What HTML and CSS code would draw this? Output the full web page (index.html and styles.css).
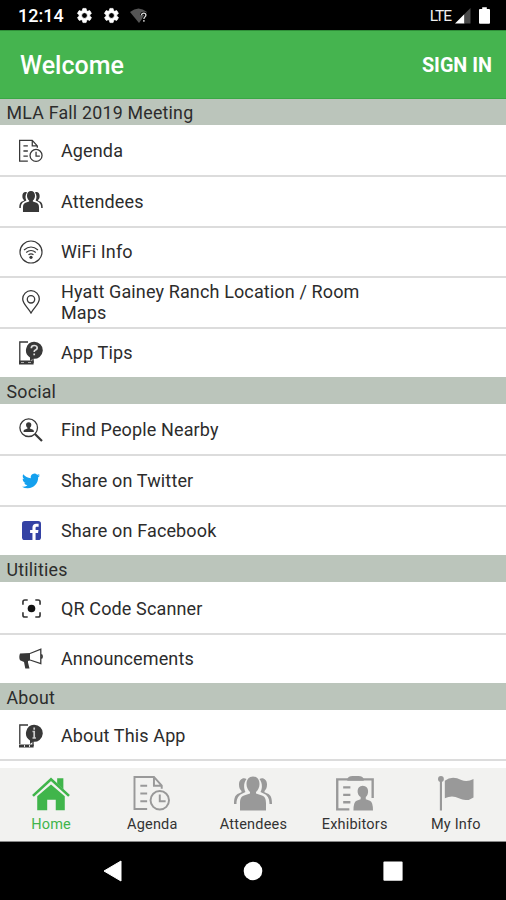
FILE: index.html
```html
<!DOCTYPE html>
<html lang="en">
<head>
<meta charset="utf-8">
<title>Welcome</title>
<link rel="stylesheet" href="styles.css">
</head>
<body>
<svg class="defs" aria-hidden="true">
  <symbol id="gear" viewBox="0 0 24 24"><path d="M19.4 13c0-.3.1-.6.1-1s0-.7-.1-1l2.1-1.600c.2-.2.300-.4.100-.6l-2-3.500c-.1-.2-.4-.3-.6-.2l-2.500 1c-.5-.4-1.100-.7-1.700-1l-.4-2.600c0-.3-.2-.5-.5-.5h-4c-.2 0-.4.200-.5.500l-.4 2.600c-.6.200-1.200.6-1.700 1l-2.500-1c-.2-.1-.5 0-.6.200l-2 3.500c-.1.200-.1.500.1.600L4.500 11c0 .3-.1.700-.1 1s0 .7.100 1l-2.100 1.600c-.2.200-.3.400-.1.600l2 3.500c.1.200.4.300.6.200l2.500-1c.5.400 1.100.7 1.700 1l.4 2.600c0 .3.200.5.500.5h4c.3 0 .5-.2.500-.5l.4-2.600c.6-.2 1.200-.6 1.700-1l2.500 1c.2.100.5 0 .6-.2l2-3.500c.1-.2.100-.5-.1-.6zM12 16a4 4 0 1 1 0-8 4 4 0 0 1 0 8z" fill="currentColor" fill-rule="evenodd" stroke="currentColor" stroke-width="1"/></symbol>
  <symbol id="agenda" viewBox="0 0 38 36"><g fill="none" stroke="currentColor" stroke-width="2"><path d="M14 34H1V1h20l8 9v3M21 1v9h8M7 10h7M7 18h7M7 26h7"/><circle cx="27" cy="25" r="9.500"/><path d="M27 19v7h6"/></g></symbol>
  <symbol id="people" viewBox="0 0 38 34"><g fill="currentColor"><path d="M19 0c4 0 6.500 3 6.500 7.500 0 3.500-1.500 6-3.500 8v1.500l6 2c3 1 4 3.500 4 8V34H6v-7c0-4.500 1-7 4-8l6-2v-1.500c-2-2-3.500-4.500-3.500-8C12.500 3 15 0 19 0z"/><path d="M12.500 2.500C9 .5 5 3 5 8c0 3.500 1 5 2.500 6.500v1.200L3.500 17.500C1 19 0 22 0 27.500h2.500C2.500 22.500 4 20 6.500 18l5-2.500c-2-4-2-9 1-13zM25.500 2.500C29 .5 33 3 33 8c0 3.500-1 5-2.500 6.500v1.200l4 1.800C37 19 38 22 38 27.500h-2.500c0-5-1.500-7.500-4-9.500l-5-2.500c2-4 2-9-1-13z"/></g></symbol>
</svg>
<div class="screen">
  <header class="status">
    <span class="time">12:14</span>
    <svg class="gear"><use href="#gear"/></svg>
    <svg class="gear"><use href="#gear"/></svg>
    <svg class="wifi" viewBox="0 0 18 16"><path d="M0 4Q8.500-3 17 4L9 15z" fill="#555"/><path d="M11.500 7.200q.2-2 2.200-2 2.200 0 2.200 2c0 1.600-2 1.800-2 3.800M13.900 12v1.800" fill="none" stroke="#000" stroke-width="3"/><path d="M11.500 7.200q.2-2 2.200-2 2.200 0 2.200 2c0 1.600-2 1.800-2 3.800M13.900 12v1.800" fill="none" stroke="#ddd" stroke-width="1.300"/></svg>
    <span class="lte">LTE</span>
    <svg class="signal" viewBox="0 0 16 16"><path d="M0 15.500L9.500 6v9.500z" fill="#fff"/><path d="M9.500 6L15.500 0v15.500h-6z" fill="#4a4a4a"/></svg>
    <svg class="battery" viewBox="0 0 12 18"><path d="M3.500 0h5v2H11q1 0 1 1v14q0 1-1 1H1q-1 0-1-1V3q0-1 1-1h2.500z" fill="#fff"/></svg>
  </header>
  <div class="appbar"><h1>Welcome</h1><span class="signin">SIGN IN</span></div>
  <main class="list">
    <h2 class="first">MLA Fall 2019 Meeting</h2>
    <div class="row"><svg class="icon"><use href="#agenda"/></svg><span>Agenda</span></div>
    <div class="row"><svg class="icon attendees"><use href="#people"/></svg><span>Attendees</span></div>
    <div class="row"><svg class="icon" viewBox="0 0 24 24"><g fill="none" stroke="currentColor" stroke-width="1.200"><circle cx="12" cy="12" r="11"/><path d="M5 10q7-6 14 0M7.200 12.500q4.800-4 9.600 0M9.500 14.800q2.500-2 5 0"/></g><circle cx="12" cy="17.300" r="1.600" fill="currentColor"/></svg><span>WiFi Info</span></div>
    <div class="row"><svg class="icon" viewBox="0 0 24 24"><g fill="none" stroke="currentColor" stroke-width="1.300"><path d="M12 23C9.500 18 3.700 14 3.700 9a8.300 8.300 0 0 1 16.600 0c0 5-5.800 9-8.300 14z"/><circle cx="12" cy="9.300" r="3.700"/></g></svg><span>Hyatt Gainey Ranch Location / Room Maps</span></div>
    <div class="row"><svg class="icon" viewBox="0 0 24 24"><path d="M9 1H.8v19M14 17v5" fill="none" stroke="currentColor" stroke-width="1.300"/><path d="M0 19.500h14.600v4H0z" fill="currentColor"/><path d="M2 21.500h3m4 0h3" stroke="#aaa"/><path d="M15 .8a8.500 8.500 0 1 1-1 16.900L11 20v-3.500A8.500 8.500 0 0 1 15 .8z" fill="currentColor"/><path d="M12.300 7.200q0-2.700 2.900-2.700c3.700 0 3.700 3.600 1.200 4.500-1 .4-1.200.8-1.200 2M15.200 12.500v1.800" fill="none" stroke="#ddd" stroke-width="1.700"/></svg><span>App Tips</span></div>
    <h2>Social</h2>
    <div class="row"><svg class="icon" viewBox="0 0 24 24"><g fill="none" stroke="currentColor"><circle cx="9.700" cy="9.700" r="8.800" stroke-width="1.300"/><path d="M16 16l7 7" stroke-width="2.200"/></g><path d="M9.700 4.200c3.600 0 3 4.200 1.200 5.600v.8l3.200 1.200q.8.500.8 2.200H4.500q0-1.700.8-2.200l3.200-1.200v-.8C6.700 8.400 6.100 4.200 9.700 4.200z" fill="currentColor"/></svg><span>Find People Nearby</span></div>
    <div class="row"><svg class="icon twitter" viewBox="0 0 24 24"><path d="M23.950 4.570a10 10 0 0 1-2.820.77 4.960 4.960 0 0 0 2.160-2.720c-.95.550-2 .950-3.120 1.180a4.920 4.920 0 0 0-8.390 4.490C7.690 8.100 4.070 6.130 1.640 3.160a4.820 4.820 0 0 0-.67 2.480c0 1.710.87 3.210 2.190 4.100a4.900 4.900 0 0 1-2.230-.62v.06a4.920 4.920 0 0 0 3.950 4.830 5 5 0 0 1-2.210.08 4.940 4.940 0 0 0 4.600 3.420A9.870 9.870 0 0 1 0 19.540a13.990 13.990 0 0 0 7.560 2.210c9.050 0 14-7.500 14-13.980 0-.21 0-.42-.02-.63a9.940 9.940 0 0 0 2.410-2.570z" fill="#14a0ee"/></svg><span>Share on Twitter</span></div>
    <div class="row"><svg class="icon facebook" viewBox="0 0 20 20"><rect width="20" height="20" rx="3" fill="#3442a4"/><path d="M11 20v-7.500H8.500V9.500H11V7.200C11 4.300 12.500 3 15 3h2.500v3h-1.700c-1.200 0-1.500.5-1.500 1.500v2h3l-.4 3h-2.600V20z" fill="#fff"/></svg><span>Share on Facebook</span></div>
    <h2>Utilities</h2>
    <div class="row"><svg class="icon qr" viewBox="0 0 20 20"><path d="M1 6V3q0-2 2-2h3M14 1h3q2 0 2 2v3M19 14v3q0 2-2 2h-3M6 19H3q-2 0-2-2v-3" fill="none" stroke="#333" stroke-width="1.700"/><circle cx="10" cy="10" r="4" fill="#111"/></svg><span>QR Code Scanner</span></div>
    <div class="row"><svg class="icon" viewBox="0 0 24 24"><path d="M1 6.500L11 6v7.500l-2 .5v1.500l1.500 6H6.300L5 15 1 13.200q-1.400-3.200 0-6.700z" fill="currentColor"/><path d="M11 6.500L21.800 2.200v14.500L11 13M22.500 7.500q1.500 2 0 4" fill="none" stroke="currentColor" stroke-width="1.300"/></svg><span>Announcements</span></div>
    <h2>About</h2>
    <div class="row"><svg class="icon" viewBox="0 0 24 24"><path d="M9 1H.8v19M14 17v5" fill="none" stroke="currentColor" stroke-width="1.300"/><path d="M0 20.500h14.600v3H0z" fill="currentColor"/><path d="M5 22h1m4 0h1" stroke="#ddd" stroke-width="2"/><path d="M15 .8a8.500 8.500 0 1 1-1 16.900L11 20v-3.500A8.500 8.500 0 0 1 15 .8z" fill="currentColor"/><path d="M15.200 3.500v2.300M13.500 7.500h1.700v6.500M13.500 14h3.400" fill="none" stroke="#ccc" stroke-width="1.700"/></svg><span>About This App</span></div>
  </main>
  <nav class="tabs">
    <div class="tab active"><svg viewBox="0 0 40 35"><path d="M5.500 20.500L20 8 34.500 20.500V35H25V24h-9v11H5.500z" fill="currentColor"/><path d="M26.500 1.500H33V13l-6.500-6z" fill="currentColor"/><path d="M1 20L20 2.500 39 20" fill="none" stroke="currentColor" stroke-width="2.800"/></svg><span>Home</span></div>
    <div class="tab"><svg><use href="#agenda"/></svg><span>Agenda</span></div>
    <div class="tab"><svg><use href="#people"/></svg><span>Attendees</span></div>
    <div class="tab"><svg viewBox="0 0 37 34"><path d="M13 32.500H1.200V3.200h34.500v18.300M7 11h7M7 18.300h7M7 25.500h7" fill="none" stroke="currentColor" stroke-width="2.300"/><path d="M11 3q1-3 5-3h6q4 0 5 3v1.500H11zM26 9.500c7 0 6 9 3 11v2l4 1.500q3 1 3 9.500H17q0-8.500 3-9.500l4-1.500v-2c-4-2-4.500-11 2-11z" fill="currentColor"/></svg><span>Exhibitors</span></div>
    <div class="tab"><svg viewBox="0 0 37 36"><circle cx="3" cy="3" r="3" fill="currentColor"/><path d="M3 3v32.500" stroke="currentColor" stroke-width="2.200"/><path d="M7 5q7-6 17-1 6 2.500 12.500-1v19q-7 5-15 1-7-4-14.500 0z" fill="currentColor"/></svg><span>My Info</span></div>
  </nav>
  <footer class="softkeys">
    <svg viewBox="0 0 20 22"><path d="M18 1v20L1 11z" fill="#fff" stroke="#fff" stroke-linejoin="round"/></svg>
    <svg viewBox="0 0 20 22"><circle cx="10" cy="11" r="9.300" fill="#fff"/></svg>
    <svg viewBox="0 0 20 22"><rect x=".4" y="1.500" width="19.200" height="19.200" rx="1" fill="#fff"/></svg>
  </footer>
</div>
</body>
</html>
```
FILE: styles.css
```css
* { box-sizing: border-box; }
body { margin: 0; background: #000; font-family: Roboto, "Liberation Sans", sans-serif; }
.defs { display: none; }
.screen { width: 506px; height: 900px; display: flex; flex-direction: column; overflow: hidden; background: #fff; }
.status { height: 30px; flex: none; background: #000; color: #fff; display: flex; align-items: center; padding: 1px 16px 0 18px; }
.time { width: 58px; font-size: 18px; font-weight: 500; }
.gear { width: 17px; height: 17px; margin-right: 10px; }
.wifi { width: 18px; height: 16px; }
.lte { margin-left: auto; font-size: 15.500px; letter-spacing: -1px; color: #eee; }
.signal { width: 16px; height: 16px; margin: 0 8px 0 4px; }
.battery { width: 11px; height: 17px; }
.appbar { height: 69px; flex: none; background: #45b44f; border-top: 1px solid #2f8f39; border-bottom: 1px solid #39a845; color: #fff; display: flex; align-items: center; justify-content: space-between; padding: 2px 14px 0 20px; }
h1 { margin: 0; font-size: 25px; font-weight: 500; }
.signin { font-size: 19.800px; font-weight: 700; }
.list { flex: 1; min-height: 0; color: #2c2c2c; }
h2 { margin: 0; height: 27px; background: #bbc5bb; padding-left: 6.500px; font-size: 17.800px; font-weight: 400; line-height: 29px; letter-spacing: .22px; }
h2.first { height: 26px; line-height: 27px; }
.row { height: 50.400px; display: flex; align-items: center; padding: 2px 0 0 19px; font-size: 18px; line-height: 21.500px; letter-spacing: .13px; }
.row + .row { border-top: 2px solid #dcdcdc; padding-top: 0; }
.row:last-child { border-bottom: 2px solid #dcdcdc; height: 51.400px; }
.row span { width: 310px; }
.icon { width: 24px; height: 24px; margin-right: 18px; flex: none; color: #383838; }
.icon.attendees { height: 21px; }
.icon.twitter { width: 18px; height: 18px; margin: 0 21px 0 3px; }
.icon.facebook, .icon.qr { width: 19px; height: 19px; margin: 0 20px 0 3px; }
.tabs { height: 74px; flex: none; display: grid; grid-template-columns: repeat(5, 1fr); background: #f2f2f0; border-bottom: 1px solid #888; }
.tab { display: flex; flex-direction: column; align-items: center; padding: 8px 0 0 1px; color: #999; }
.tab svg { width: 38px; height: 35px; }
.tab span { margin-top: 4px; font-size: 14.500px; line-height: 19px; letter-spacing: .2px; color: #333; }
.tab.active, .tab.active span { color: #40b54b; }
.softkeys { height: 58px; flex: none; background: #000; display: flex; justify-content: center; align-items: center; gap: 120px; }
.softkeys svg { width: 20px; height: 22px; }
```
